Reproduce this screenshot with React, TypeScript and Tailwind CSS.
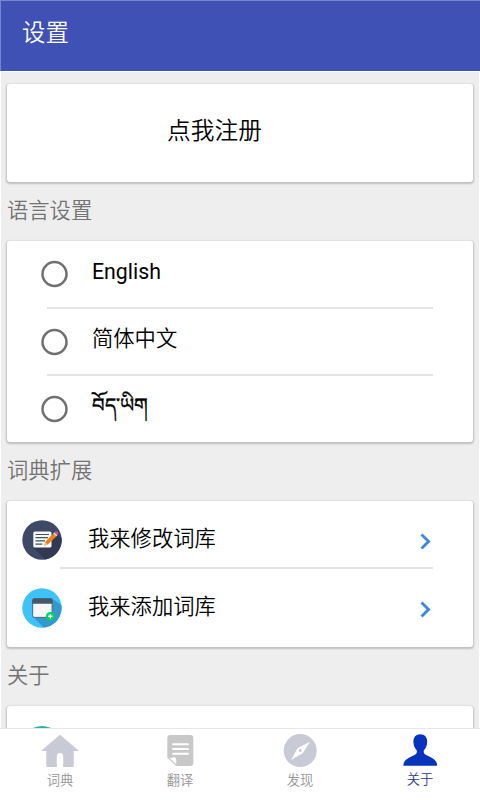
import type { ReactNode } from 'react';

const FONT = "font-['Roboto','Noto_Sans_CJK_SC',sans-serif]";

const LANGUAGES = [
  { label: 'English', className: 'text-[21.3px] pb-[5px]' },
  { label: '简体中文', className: 'text-[21.3px] font-[350] pb-[5px]' },
  { label: 'བོད་ཡིག', className: 'text-[19.5px] pb-[7px] [-webkit-text-stroke:0.4px_black]' },
];

function EditIcon() {
  return (
    <svg width="40" height="40" viewBox="0 0 40 40">
      <circle cx="20" cy="20" r="19.7" fill="#3d4967" />
      <path d="M12 28 L23 39.4 A19.7 19.7 0 0 0 39.6 18 L33.5 12.5 L29 13 Z" fill="#303b52" />
      <rect x="11.3" y="11.4" width="18.2" height="16.2" rx="1.6" fill="#fafafa" />
      <path d="M13.5 14.5H27M13.5 17.7H26M13.5 20.9H23M13.5 24.1H20.3" stroke="#3d5560" strokeWidth="1.2" />
      <path d="M22 25.8 L23.2 22 L31.2 13.5 L34.2 16.5 L25.8 24.4 Z" fill="#f57c16" />
      <path d="M22 25.8 L23.2 22 L25.8 24.4 Z" fill="#f2c18c" />
      <path d="M31.2 13.5 L32.4 12.3 L35.4 15.3 L34.2 16.5 Z" fill="#dfe4ea" />
      <path d="M32.4 12.3 L33.3 11.5 Q34.7 10.9 35.8 12 Q36.8 13.2 36.1 14.5 L35.4 15.3 Z" fill="#d84c86" />
    </svg>
  );
}

function AddIcon() {
  return (
    <svg width="40" height="40" viewBox="0 0 40 40">
      <circle cx="20" cy="20" r="19.7" fill="#3ec2fb" />
      <path d="M11 28.5 L21.5 39.6 A19.7 19.7 0 0 0 39.2 17 L30 10.5 Z" fill="#3399cc" />
      <rect x="10.7" y="10.8" width="19.4" height="18.6" rx="1.8" fill="#f7f7f7" stroke="#465a65" strokeWidth="0.9" />
      <path d="M10.3 15.7 V12.2 Q10.3 10.3 12.2 10.3 H28.6 Q30.5 10.3 30.5 12.2 V15.7 Z" fill="#465a65" />
      <circle cx="28.3" cy="28.3" r="4.4" fill="#06d45d" />
      <path d="M28.3 26.2V30.4M26.2 28.3H30.4" stroke="#fff" strokeWidth="1.4" />
    </svg>
  );
}

function Radio() {
  return (
    <svg width="28" height="28" viewBox="0 0 28 28" fill="none" className="-ml-[7px]">
      <circle cx="14.5" cy="14" r="12" stroke="#707070" strokeWidth="2.5" />
    </svg>
  );
}

function Chevron() {
  return (
    <svg width="12" height="17" viewBox="0 0 12 17" fill="none">
      <path d="M1.5 1.5 L8.6 8.5 L1.5 15.5" stroke="#3a88dd" strokeWidth="2.8" />
    </svg>
  );
}

function HomeIcon() {
  return (
    <svg width="40" height="34" viewBox="0 0 40 34">
      <path d="M20 0.7 L39 17 H33.7 V33 H23.2 V22.2 A3.2 3.2 0 0 0 16.8 22.2 V33 H6.3 V17 H1 Z" fill="#c8cad6" />
    </svg>
  );
}

function TranslateIcon() {
  return (
    <svg width="40" height="34" viewBox="0 0 40 34">
      <path d="M10.3 1 H30.3 Q33.3 1 33.3 4 V29 Q33.3 32 30.3 32 H16 L7.3 23.5 V4 Q7.3 1 10.3 1 Z" fill="#c8c8c8" />
      <path d="M9.3 23.7 Q12.5 24.6 13.6 23 Q16 23.3 16.2 25.7 Q16.6 27.2 16 30.2 Z" fill="#fff" />
      <path d="M13 10.2H28M13 15H28M13 19.8H28" stroke="#fff" strokeWidth="2" strokeLinecap="round" />
    </svg>
  );
}

function CompassIcon() {
  return (
    <svg width="40" height="34" viewBox="0 0 40 34">
      <circle cx="20.2" cy="16.6" r="16.5" fill="#c8cad6" />
      <path d="M30 7.7 L22.7 19.2 L11 26 L17.7 14 Z" fill="#fff" />
      <circle cx="20.2" cy="16.6" r="1.5" fill="#c8cad6" />
    </svg>
  );
}

function PersonIcon() {
  return (
    <svg width="40" height="34" viewBox="0 0 40 34">
      <path
        d="M20.3 0.2 C25 0.2 27.4 3.5 27.2 8.3 C27 12.5 25.3 14.8 23.8 16.5 C23.4 18.8 24.3 20.2 26.5 21.2 C32 23.7 36.9 25.5 37.2 31.7 H3.3 C3.7 25.5 8.7 23.7 14.1 21.2 C16.3 20.2 17.2 18.8 16.8 16.5 C15.3 14.8 13.6 12.5 13.4 8.3 C13.2 3.5 15.6 0.2 20.3 0.2 Z"
        fill="#0833bd"
      />
    </svg>
  );
}

const EXTENSIONS = [
  { label: '我来修改词库', icon: <EditIcon /> },
  { label: '我来添加词库', icon: <AddIcon /> },
];

const TABS = [
  { label: '词典', icon: <HomeIcon />, active: false },
  { label: '翻译', icon: <TranslateIcon />, active: false },
  { label: '发现', icon: <CompassIcon />, active: false },
  { label: '关于', icon: <PersonIcon />, active: true },
];

function Card({ className, children }: { className: string; children?: ReactNode }) {
  return (
    <section
      className={`shrink-0 rounded-[3px] bg-white shadow-[0_1px_2px_1px_rgba(0,0,0,0.2)] ${className}`}
    >
      {children}
    </section>
  );
}

function SectionTitle({ children }: { children: ReactNode }) {
  return (
    <h2 className="flex h-[59px] shrink-0 items-center pb-[2px] text-[21.3px] font-[350] leading-none text-[#737373]">
      {children}
    </h2>
  );
}

export default function App() {
  return (
    <div className={`flex h-[800px] w-[480px] flex-col overflow-hidden bg-[#eeeeee] text-black ${FONT}`}>
      <header className="flex h-[71px] shrink-0 items-center border-t border-l border-t-[#7985ca] border-l-[#7985ca] bg-[#3f51b5] pb-[5px] pl-[21px] text-[23.4px] font-[350] leading-none text-white">
        设置
      </header>

      <main className="flex min-h-0 flex-1 flex-col overflow-hidden border-x border-t border-white px-1.5 pt-3">
        <Card className="flex h-[98px] items-center justify-center pb-[2px] pr-[51px] text-[23.7px] font-[350] leading-none">
          点我注册
        </Card>

        <SectionTitle>语言设置</SectionTitle>
        <Card className="h-[201px] pl-10 pr-10">
          {LANGUAGES.map((lang, i) => (
            <div
              key={lang.label}
              className={`flex items-center ${i < 2 ? 'h-[67.7px] border-b-2 border-[#e3e3e3]' : 'h-[66px]'}`}
            >
              <Radio />
              <span className={`ml-6 leading-none ${lang.className}`}>{lang.label}</span>
            </div>
          ))}
        </Card>

        <SectionTitle>词典扩展</SectionTitle>
        <Card className="h-[146px] pl-[14.5px] pr-10">
          {EXTENSIONS.map((item, i) => (
            <div key={item.label} className="flex h-[67.5px] items-center">
              <div className="pt-[11px]">{item.icon}</div>
              <div
                className={`ml-[-1.5px] flex h-full flex-1 items-center justify-between pl-7 ${i === 0 ? 'border-b-2 border-[#e3e3e3]' : ''}`}
              >
                <span className={`text-[21.3px] font-[350] leading-none ${i === 0 ? 'pt-[9px]' : 'pt-[8px]'}`}>
                  {item.label}
                </span>
                <span className={`pr-px ${i === 0 ? 'pt-4' : 'pt-[14px]'}`}>
                  <Chevron />
                </span>
              </div>
            </div>
          ))}
        </Card>

        <SectionTitle>关于</SectionTitle>
        <Card className="h-[146px] pl-[14.5px] pt-5">
          <div className="h-10 w-10 rounded-full bg-[#1fb5a4]" />
        </Card>
      </main>

      <nav className="grid h-[72px] shrink-0 grid-cols-4 border-t border-[#e8e8e8] bg-white">
        {TABS.map((tab) => (
          <div
            key={tab.label}
            className={`flex flex-col items-center pt-[5px] text-[13.3px] font-[350] leading-none ${tab.active ? 'text-[#28388c]' : 'text-[#949494]'}`}
          >
            {tab.icon}
            <span className={tab.active ? 'mt-[5px]' : 'mt-[6px]'}>{tab.label}</span>
          </div>
        ))}
      </nav>
    </div>
  );
}
